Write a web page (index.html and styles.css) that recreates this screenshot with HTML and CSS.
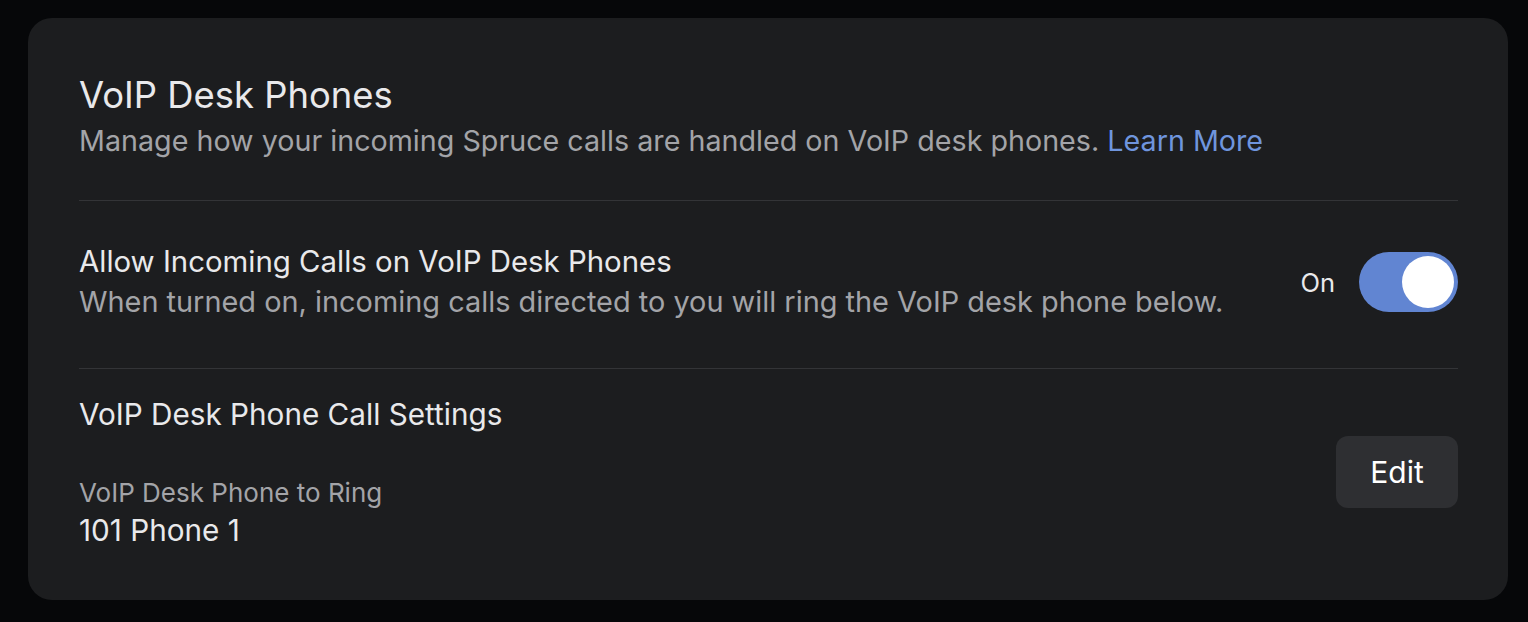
FILE: index.html
```html
<!DOCTYPE html>
<html>
<head>
<meta charset="utf-8">
<link rel="stylesheet" href="styles.css">
</head>
<body>
<div class="card">
  <section class="header">
    <h1 class="title">VoIP Desk Phones</h1>
    <p class="subtitle">Manage how your incoming Spruce calls are handled on VoIP desk phones. <a class="link" href="#">Learn More</a></p>
  </section>
  <section class="row toggle-row">
    <div class="row-text">
      <div class="row-title">Allow Incoming Calls on VoIP Desk Phones</div>
      <div class="row-desc">When turned on, incoming calls directed to you will ring the VoIP desk phone below.</div>
    </div>
    <div class="toggle-wrap">
      <span class="toggle-label">On</span>
      <span class="toggle"><span class="knob"></span></span>
    </div>
  </section>
  <section class="row settings-row">
    <div class="row-text">
      <div class="row-title section-title">VoIP Desk Phone Call Settings</div>
      <div class="field-label">VoIP Desk Phone to Ring</div>
      <div class="field-value">101 Phone 1</div>
    </div>
    <button class="edit-btn">Edit</button>
  </section>
</div>
</body>
</html>
```

FILE: styles.css
```css
html, body {
  margin: 0;
  padding: 0;
  background: #060709;
  font-family: Inter, "Noto Sans", sans-serif;
}
body {
  padding: 18px 20px 22px 28px;
}
.card {
  background: #1c1d1f;
  border-radius: 24px;
  width: 1480px;
  height: 582px;
  box-sizing: border-box;
  padding: 0 50px 0 51px;
}
.header {
  padding-top: 57px;
  padding-bottom: 41px;
  border-bottom: 1px solid #333437;
}
.title {
  margin: 0;
  font-size: 36.4px;
  line-height: 40px;
  font-weight: 400;
  color: #e9e9eb;
}
.subtitle {
  margin: 8px 0 0;
  font-size: 28.7px;
  line-height: 36px;
  color: #a3a4a8;
}
.link {
  color: #6f95dd;
  text-decoration: none;
}
.row {
  display: flex;
  align-items: center;
  justify-content: space-between;
}
.toggle-row {
  padding: 43px 0 48px;
  border-bottom: 1px solid #333437;
}
.row-title {
  font-size: 29.4px;
  line-height: 36px;
  color: #e9e9eb;
}
.section-title {
  font-size: 29.7px;
}
.row-desc {
  margin-top: 4px;
  font-size: 28.9px;
  line-height: 36px;
  color: #a3a4a8;
}
.toggle-wrap {
  display: flex;
  align-items: center;
  gap: 24px;
}
.toggle-label {
  font-size: 25.5px;
  color: #e9e9eb;
}
.toggle {
  width: 99px;
  height: 60px;
  border-radius: 30px;
  background: #6185d2;
  display: flex;
  align-items: center;
  justify-content: flex-end;
  padding: 0 4px;
  box-sizing: border-box;
}
.knob {
  width: 52px;
  height: 52px;
  border-radius: 50%;
  background: #ffffff;
}
.settings-row {
  padding-top: 27px;
}
.field-label {
  margin-top: 45px;
  font-size: 26px;
  line-height: 32px;
  color: #a3a4a8;
}
.field-value {
  margin-top: 3px;
  font-size: 29.7px;
  line-height: 36px;
  color: #e9e9eb;
}
.edit-btn {
  width: 122px;
  height: 72px;
  border: none;
  border-radius: 12px;
  background: #2e2f32;
  color: #ffffff;
  font-family: inherit;
  font-size: 30px;
}
```
